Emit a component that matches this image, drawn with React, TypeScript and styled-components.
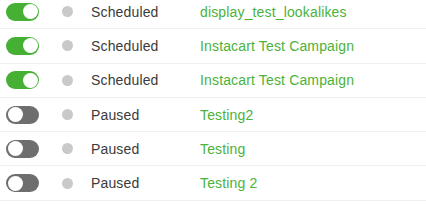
import React from 'react';
import styled, { createGlobalStyle } from 'styled-components';

const campaigns = [
    { id: 1, active: true, status: 'Scheduled', name: 'display_test_lookalikes' },
    { id: 2, active: true, status: 'Scheduled', name: 'Instacart Test Campaign' },
    { id: 3, active: true, status: 'Scheduled', name: 'Instacart Test Campaign' },
    { id: 4, active: false, status: 'Paused', name: 'Testing2' },
    { id: 5, active: false, status: 'Paused', name: 'Testing' },
    { id: 6, active: false, status: 'Paused', name: 'Testing 2' },
];

export default function App() {
    return (
        <>
            <GlobalStyle />
            <Table>
                {campaigns.map((c) => (
                    <Row key={c.id}>
                        <ToggleCell>
                            <Toggle $on={c.active}>
                                <Knob $on={c.active} />
                            </Toggle>
                        </ToggleCell>
                        <DotCell>
                            <Dot />
                        </DotCell>
                        <Status>{c.status}</Status>
                        <Name href='#'>{c.name}</Name>
                    </Row>
                ))}
            </Table>
        </>
    );
}

const GlobalStyle = createGlobalStyle`
    body {
        margin: 0;
        background: #fff;
        font-family: 'Liberation Sans', Arial, sans-serif;
        overflow: hidden;
    }
`;

const Table = styled.div`
    margin-top: -5px;
    width: 426px;
`;

const Row = styled.div`
    display: flex;
    align-items: center;
    height: 33.3px;
    border-bottom: 1px solid #f0f0f0;
    font-size: 14px;
    letter-spacing: 0.15px;
`;

const ToggleCell = styled.div`
    width: 62px;
    padding-left: 6px;
    box-sizing: border-box;
    display: flex;
    align-items: center;
`;

const Toggle = styled.div<{ $on: boolean }>`
    position: relative;
    width: 33px;
    height: 18px;
    border-radius: 9px;
    background: ${(p) => (p.$on ? '#46b035' : '#6e6e6e')};
`;

const Knob = styled.div<{ $on: boolean }>`
    position: absolute;
    top: 1.5px;
    left: ${(p) => (p.$on ? '16.5px' : '1.5px')};
    width: 15px;
    height: 15px;
    border-radius: 50%;
    background: #fff;
`;

const DotCell = styled.div`
    width: 29px;
    display: flex;
    align-items: center;
`;

const Dot = styled.div`
    width: 11px;
    height: 11px;
    border-radius: 50%;
    background: #c9c9c9;
`;

const Status = styled.div`
    width: 109px;
    color: #3b3b3b;
`;

const Name = styled.a`
    color: #4bb23a;
    text-decoration: none;
`;
